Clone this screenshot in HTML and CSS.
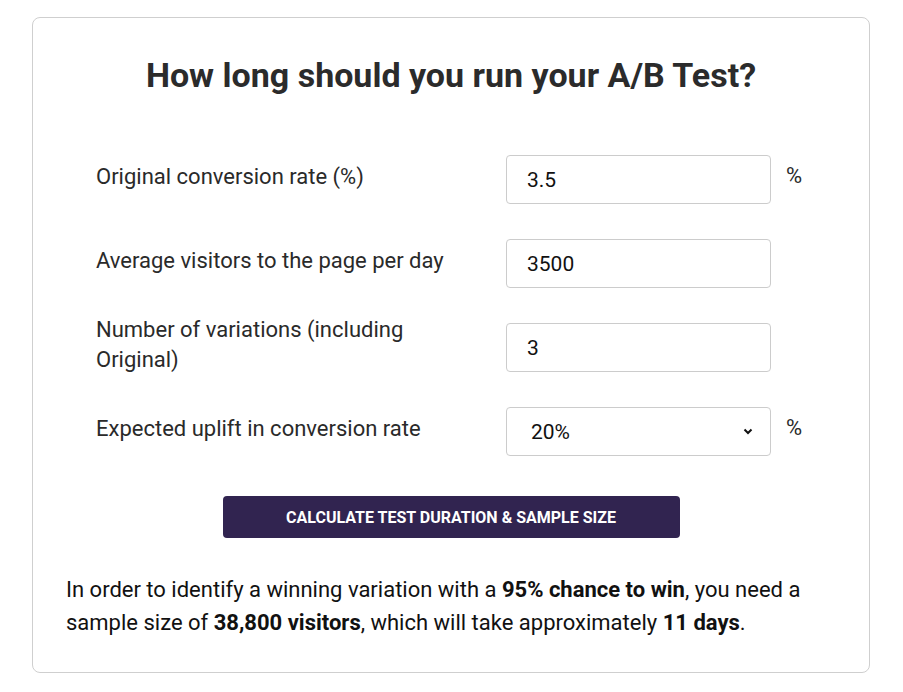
FILE: index.html
```html
<!DOCTYPE html>
<html lang="en">
<head>
<meta charset="utf-8">
<title>A/B Test Duration Calculator</title>
<link rel="stylesheet" href="styles.css">
</head>
<body>
<div class="card">
  <h1 class="title">How long should you run your A/B Test?</h1>
  <form class="form">
    <div class="row">
      <label class="label" for="cr">Original conversion rate (%)</label>
      <input class="field" id="cr" type="text" value="3.5">
      <span class="unit">%</span>
    </div>
    <div class="row">
      <label class="label" for="vis">Average visitors to the page per day</label>
      <input class="field" id="vis" type="text" value="3500">
      <span class="unit"></span>
    </div>
    <div class="row">
      <label class="label" for="var">Number of variations (including Original)</label>
      <input class="field" id="var" type="text" value="3">
      <span class="unit"></span>
    </div>
    <div class="row">
      <label class="label" for="up">Expected uplift in conversion rate</label>
      <div class="select-wrap">
        <select class="field select" id="up">
          <option>20%</option>
        </select>
        <svg class="chevron" width="10" height="7" viewBox="0 0 10 7"><path d="M1.5 1.5 L5 5 L8.5 1.5" fill="none" stroke="#111" stroke-width="2"/></svg>
      </div>
      <span class="unit">%</span>
    </div>
  </form>
  <div class="actions">
    <button class="btn" type="button">Calculate test duration &amp; sample size</button>
  </div>
  <p class="result">In order to identify a winning variation with a <b>95% chance to win</b>, you need a sample size of <b>38,800 visitors</b>, which will take approximately <b>11 days</b>.</p>
</div>
</body>
</html>
```

FILE: styles.css
```css
* { box-sizing: border-box; }
html, body { margin: 0; padding: 0; background: #fff; }
body {
  font-family: Roboto, "Liberation Sans", Arial, sans-serif;
  padding: 17px 0 0 32px;
}
.card {
  width: 838px;
  height: 656px;
  border: 1px solid #cfcfcf;
  border-radius: 8px;
  padding: 37px 33px 0 33px;
}
.title {
  margin: 0;
  font-size: 34px;
  line-height: 40px;
  font-weight: 700;
  color: #2b2b2b;
  text-align: center;
}
.form {
  margin: 60px 0 0 30px;
  display: flex;
  flex-direction: column;
  gap: 35px;
}
.row {
  display: grid;
  grid-template-columns: 395px 265px 40px;
  grid-template-rows: 49px;
  column-gap: 15px;
  height: 49px;
  align-items: center;
}
.label {
  font-size: 22px;
  line-height: 30px;
  color: #2a2a2a;
  margin-bottom: 6px;
  padding-right: 30px;
}
.field {
  width: 265px;
  height: 49px;
  border: 1px solid #cccccc;
  border-radius: 4px;
  padding: 1px 20px 0 20px;
  font-family: Roboto, "Liberation Sans", Arial, sans-serif;
  font-size: 21px;
  color: #111;
  background: #fff;
  outline: none;
}
.select-wrap { position: relative; width: 265px; height: 49px; }
.select {
  -webkit-appearance: none;
  appearance: none;
  padding-left: 24px;
}
.chevron { position: absolute; right: 18px; top: 21px; }
.unit {
  align-self: start;
  font-size: 22px;
  line-height: 30px;
  color: #2a2a2a;
  padding-top: 6px;
}
.actions {
  display: flex;
  justify-content: center;
  margin-top: 40px;
}
.btn {
  width: 457px;
  height: 42px;
  border: none;
  border-radius: 4px;
  background: #312450;
  color: #fff;
  font-family: Roboto, "Liberation Sans", Arial, sans-serif;
  font-weight: 700;
  font-size: 16px;
  text-transform: uppercase;
  letter-spacing: 0;
}
.result {
  margin: 35px 0 0 0;
  font-size: 22px;
  line-height: 33px;
  color: #111;
}
.result b { font-weight: 700; }
```
